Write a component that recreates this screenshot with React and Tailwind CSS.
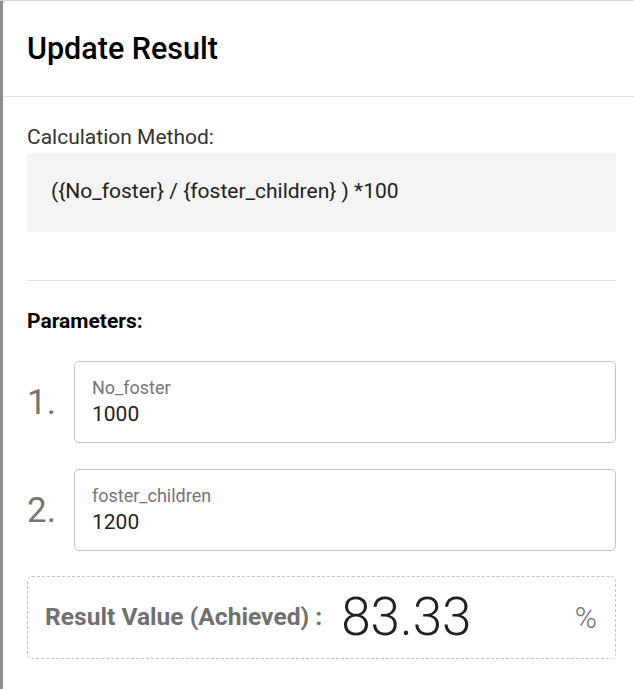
export default function App() {
  return (
    <div className="min-h-[689px] w-[634px] overflow-hidden bg-[#d6d6d6] pt-px" style={{ fontFamily: "Roboto, 'Noto Sans', sans-serif" }}>
      <div className="flex min-h-[688px]">
        <div className="w-[3px] shrink-0 bg-[#8e8e8e]" />
        <div className="w-[660px] shrink-0 rounded-tl-[4px] bg-white">
          <div className="flex h-[96px] items-center border-b border-[#e0e0e0] px-6">
            <h1 className="text-[30.5px] font-medium text-black">Update Result</h1>
          </div>
          <div className="w-[637px] px-6 pt-[28px]">
            <div className="text-[21px] leading-[24px] text-[#333]">Calculation Method:</div>
            <div className="mt-[4px] flex h-[79px] w-[589px] items-center bg-[#f4f4f4] px-6 pb-px text-[21px] text-[#222]">
              ({"{"}No_foster{"}"} / {"{"}foster_children{"}"} ) *100
            </div>
            <div className="mt-[48px] h-px w-[589px] bg-[#e0e0e0]" />
            <div className="mt-[28px] text-[21px] font-bold leading-[24px] text-black">Parameters:</div>

            <div className="mt-[28px] flex w-[589px] flex-col gap-[26px]">
              {[
                ["1.", "No_foster", "1000"],
                ["2.", "foster_children", "1200"],
              ].map(([n, label, value]) => (
                <div key={n} className="flex items-center">
                  <div className="w-[47px] shrink-0 text-[35px] leading-none text-[#757575]">{n}</div>
                  <div className="flex h-[82px] flex-1 flex-col justify-center rounded-[5px] border border-[#c4c4c4] px-[17px]">
                    <div className="text-[18px] leading-[20px] text-[#757575]">{label}</div>
                    <div className="mt-[4px] text-[21px] leading-[24px] text-[#222]">{value}</div>
                  </div>
                </div>
              ))}
            </div>

            <div className="mt-[25px] flex h-[83px] w-[589px] items-center rounded-[5px] border border-dashed border-[#c4c4c4] pl-[17px] pr-[18px]">
              <span className="text-[24.6px] font-bold text-[#707070]">Result Value (Achieved) :</span>
              <span className="ml-[19px] text-[53px] font-light leading-none text-[#222]">83.33</span>
              <span className="ml-auto text-[30px] font-light text-[#757575]">%</span>
            </div>
          </div>
        </div>
      </div>
    </div>
  );
}
